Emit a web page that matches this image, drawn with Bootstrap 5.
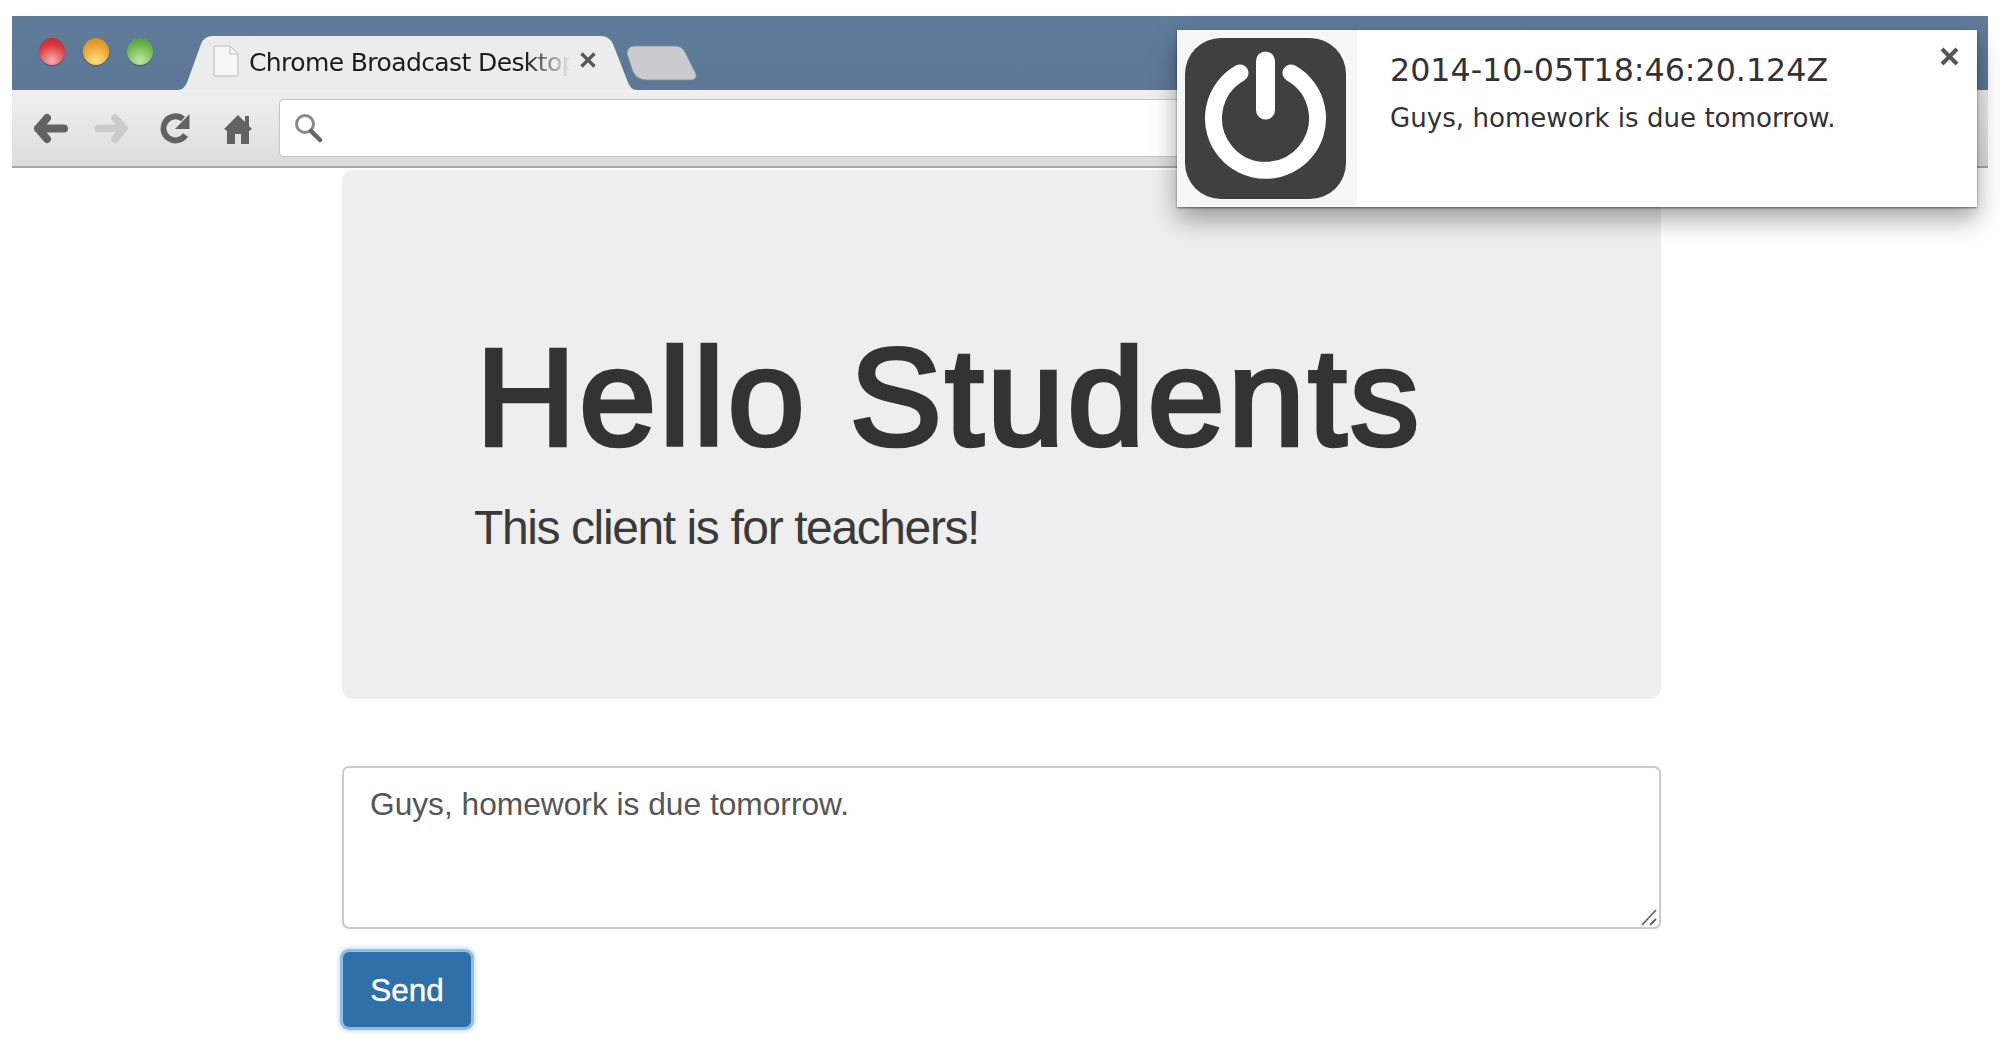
<!DOCTYPE html>
<html lang="en">
<head>
<meta charset="utf-8">
<title>Chrome Broadcast Desktop</title>
<link href="https://cdn.jsdelivr.net/npm/bootstrap@5.3.0/dist/css/bootstrap.min.css" rel="stylesheet">
<style>
html,body{height:1051px;overflow:hidden;background:#fff;}
body{font-family:"Liberation Sans",Arial,sans-serif;color:#333;padding-top:16px;position:relative;}
.win-frame{margin:0 12px;}
.tabstrip{height:74px;background:linear-gradient(#607c9b,#5d7896);position:relative;}
.traffic{gap:18px;position:absolute;left:27px;top:22px;}
.light{width:26px;height:27px;border-radius:50%;box-shadow:0 1px 1px rgba(0,0,0,.3);}
.l-red{background:radial-gradient(circle at 50% 85%,#f5b0b0,#de3a40 60%,#b8242a);}
.l-amber{background:radial-gradient(circle at 50% 85%,#fde08a,#eda22e 60%,#c9801f);}
.l-green{background:radial-gradient(circle at 50% 85%,#c0e8a0,#6fb84e 60%,#4a9336);}
.tab-shape{position:absolute;left:165px;top:20px;}
.tab-inner{position:absolute;left:201px;top:20px;height:54px;width:400px;align-items:center;}
.doc-ico{width:26px;height:32px;flex:none;margin-top:-5px;}
.tab-title{font-family:"DejaVu Sans",sans-serif;font-size:25px;color:#1c1c1c;width:322px;flex:none;white-space:nowrap;margin-left:10px;margin-top:0;-webkit-mask-image:linear-gradient(90deg,#000 86%,transparent 100%);mask-image:linear-gradient(90deg,#000 86%,transparent 100%);letter-spacing:-.6px;}
.tab-close{margin-left:9px;margin-top:-6px;flex:none;}
.toolbar{height:78px;background:linear-gradient(#f0f0f0,#dcdcdc);border-bottom:2px solid #a8a8a8;padding:9px 40px 0 21px;align-items:flex-start;}
.tool-ico{height:31px;margin-top:14px;flex:none;display:block;}
.ico-back{width:35px;}
.ico-fwd{width:35px;margin-left:26px;}
.ico-reload{width:30px;margin-left:31px;}
.ico-home{width:28px;margin-left:34px;}
.omni{height:58px;flex:1;background:#fff;border:1px solid #c4c4c4;border-radius:4px;padding-left:14px;margin-left:27px;align-items:center;}
.page-col{width:1319px;margin-left:342px;margin-top:2px;}
.hero{height:529px;background:#eee;border-radius:11px;padding:158px 100px 0 134px;margin-bottom:67px;}
.hero-title{font-size:138px;line-height:1;font-weight:400;color:#333;letter-spacing:3.5px;-webkit-text-stroke:4.5px #333;margin:0 0 38px 0;white-space:nowrap;}
.hero-sub{font-size:48px;line-height:1;color:#3a3a3a;letter-spacing:-1.4px;margin:0 0 0 -2px;font-weight:400;}
.msg-wrap{position:relative;height:163px;}
.msg-box{height:163px;border:2px solid #ccc;border-radius:7px;font-size:31.7px;color:#555;padding:16px 26px;line-height:1.3;font-family:"Liberation Sans",Arial,sans-serif;box-shadow:0 0 3px rgba(0,0,0,.06);resize:none;}
.grip{position:absolute;right:4px;bottom:3px;pointer-events:none;}
.send-btn{width:128px;height:75px;margin:23px 0 0 1px;background:#2f70a9;border:0;color:#fff;font-size:31.5px;border-radius:6px;padding:2px 0 0 0;box-shadow:0 0 0 3px #8fbde6,0 0 5px 4px #c0dbf3;display:block;-webkit-text-stroke:.4px #fff;}
.send-btn:hover{background:#2f70a9;color:#fff;}
.notice{position:absolute;left:1177px;top:30px;width:800px;height:177px;background:#fff;box-shadow:0 1px 2px rgba(0,0,0,.5),0 12px 24px rgba(0,0,0,.36);}
.notice-icon{width:180px;height:177px;background:#f6f6f6;flex:none;padding:8px 0 0 8px;}
.notice-body{font-family:"DejaVu Sans",sans-serif;padding:21px 0 0 33px;color:#333;white-space:nowrap;}
.notice-title{font-size:31.7px;line-height:38px;}
.notice-text{font-size:26.1px;line-height:34px;margin-top:12px;}
.notice-x{position:absolute;right:18px;top:17px;}
</style>
</head>
<body>
<div class="win-frame">
  <div class="d-flex tabstrip">
    <div class="d-flex traffic">
      <span class="light l-red"></span><span class="light l-amber"></span><span class="light l-green"></span>
    </div>
    <svg class="tab-shape" width="540" height="54" viewBox="0 0 540 54">
      <path d="M0 54 Q8 54 11 44 L24 8 Q27 0 36 0 L424 0 Q432 0 436 8 L450 44 Q453 54 460 54 Z" fill="#ececec"/>
      <path d="M450 18 Q450 10 458 10 L498 10 Q505 10 508 16 L519 38 Q520 44 514 44 L470 44 Q460 44 456 36 Z" fill="#cbcbcd" stroke="#7d8a9a" stroke-width=".8"/>
    </svg>
    <div class="d-flex tab-inner">
      <svg class="doc-ico" viewBox="0 0 26 32"><path d="M1 1H17L25 9V31H1Z" fill="#f6f6f6" stroke="#bbb"/><path d="M17 1V9H25" fill="none" stroke="#bbb"/></svg>
      <span class="tab-title">Chrome Broadcast Desktop</span>
      <svg class="tab-close" width="16" height="16" viewBox="0 0 16 16"><path d="M1.500 1.500L14.500 14.500M14.500 1.500L1.500 14.500" stroke="#555" stroke-width="3.200"/></svg>
    </div>
  </div>
  <div class="d-flex toolbar">
    <svg class="tool-ico ico-back" viewBox="0 0 35 31"><path d="M14 5 L5 15.500 L14 26 M5 15.500 H31" fill="none" stroke="#626262" stroke-width="8" stroke-linecap="round" stroke-linejoin="round"/></svg>
    <svg class="tool-ico ico-fwd" viewBox="0 0 35 31"><path d="M21 5 L30 15.500 L21 26 M30 15.500 H4" fill="none" stroke="#cbcbcb" stroke-width="7.500" stroke-linecap="round" stroke-linejoin="round"/></svg>
    <svg class="tool-ico ico-reload" viewBox="0 0 30 31"><path d="M23 6 A12 12 0 1 0 25.500 22" fill="none" stroke="#626262" stroke-width="6"/><path d="M29.500 1 V16 H15Z" fill="#626262"/></svg>
    <svg class="tool-ico ico-home" viewBox="0 0 28 31"><path d="M0 16 L14 2 L21 9 V3 H25 V13 L28 16 L25 18 V31 H17 V21 H11 V31 H3 V18Z" fill="#626262"/></svg>
    <div class="d-flex omni">
      <svg width="29" height="30" viewBox="0 0 29 30"><circle cx="11" cy="11" r="8.500" fill="none" stroke="#8a8a8a" stroke-width="3"/><path d="M17 18 L26 27" stroke="#666" stroke-width="4.500" stroke-linecap="round"/></svg>
    </div>
  </div>
</div>
<main class="page-col">
  <section class="hero">
    <h1 class="hero-title">Hello Students</h1>
    <p class="hero-sub">This client is for teachers!</p>
  </section>
  <div class="msg-wrap">
    <textarea class="form-control msg-box" aria-label="Message">Guys, homework is due tomorrow.</textarea>
    <svg class="grip" width="16" height="17" viewBox="0 0 16 17"><path d="M1 16L15 1M9 16L15 10" stroke="#666" stroke-width="1.800"/></svg>
  </div>
  <button type="button" class="btn btn-primary send-btn">Send</button>
</main>
<aside class="d-flex notice">
  <div class="notice-icon">
    <svg width="161" height="161" viewBox="0 0 161 161"><rect width="161" height="161" rx="36" fill="#404040"/><path d="M55 35 A 52 52 0 1 0 106 35" fill="none" stroke="#fff" stroke-width="17" stroke-linecap="round"/><path d="M80.500 23 V 72" stroke="#fff" stroke-width="19" stroke-linecap="round"/></svg>
  </div>
  <div class="notice-body">
    <div class="notice-title">2014-10-05T18:46:20.124Z</div>
    <div class="notice-text">Guys, homework is due tomorrow.</div>
  </div>
  <svg class="notice-x" width="19" height="19" viewBox="0 0 19 19"><path d="M2 2L17 17M17 2L2 17" stroke="#555" stroke-width="4"/></svg>
</aside>
<script src="https://cdn.jsdelivr.net/npm/bootstrap@5.3.0/dist/js/bootstrap.bundle.min.js"></script>
</body>
</html>
